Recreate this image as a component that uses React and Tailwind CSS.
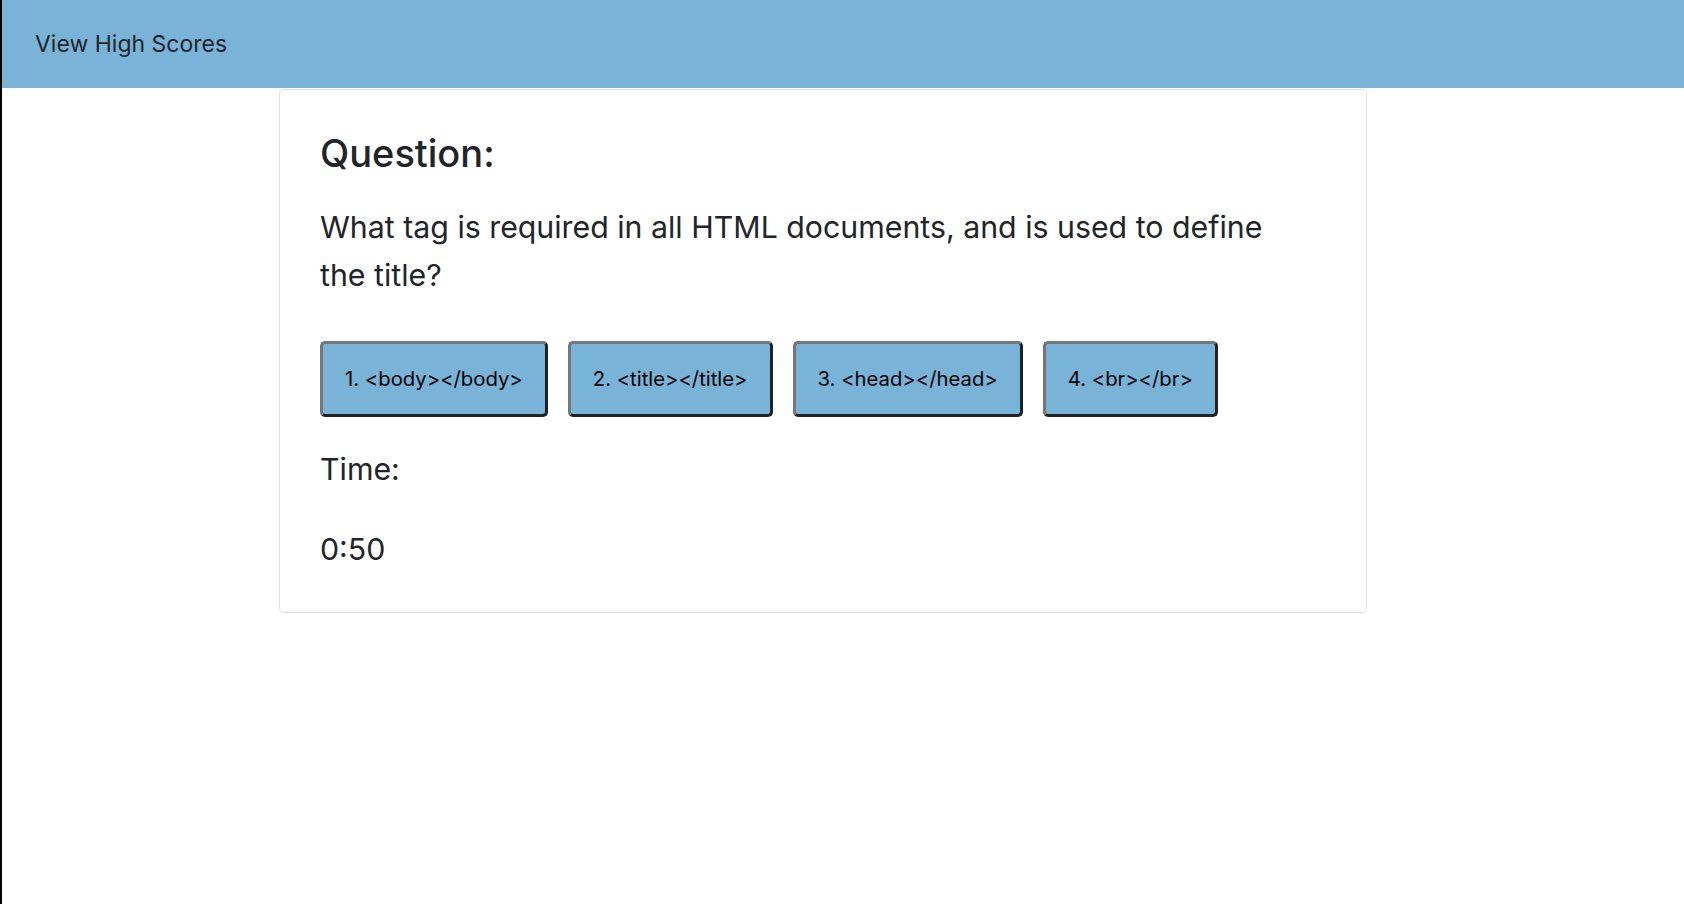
import React, { useState } from 'react';

const answers = ['1. <body></body>', '2. <title></title>', '3. <head></head>', '4. <br></br>'];

const App = () => {
  const [time] = useState('0:50');

  return (
    <div className="min-h-[904px] bg-white border-l-2 border-black font-['Inter','Roboto','Liberation_Sans',sans-serif] text-[#212529]">
      {/* Header */}
      <header className="h-[88px] bg-[#7ab3d8] flex items-center pl-[33px]">
        <span className="text-[23px] leading-none">View High Scores</span>
      </header>

      {/* Question card */}
      <div className="ml-[277px] mt-px w-[1088px] border border-[#dfdfdf] rounded-[5px] px-[40px] pt-[41px] pb-[39px]">
        <h2 className="text-[38px] font-medium leading-[1.2] mb-[26px]">Question:</h2>
        <p className="max-w-[960px] text-[30.3px] leading-[48px]">
          What tag is required in all HTML documents, and is used to define the title?
        </p>

        <div className="flex gap-[20px] mt-[42px]">
          {answers.map((answer) => (
            <button
              key={answer}
              className="bg-[#7ab3d8] text-black text-[20.3px] leading-[24px] px-[22px] py-[23px] rounded-[5px] border-[3px] border-t-[#767676] border-l-[#767676] border-r-[#222] border-b-[#222]"
            >
              {answer}
            </button>
          ))}
        </div>

        <p className="text-[30.3px] leading-[48px] mt-[28px]">Time:</p>
        <p className="text-[30.3px] leading-[48px] mt-[32px]">{time}</p>
      </div>
    </div>
  );
};

export default App;
